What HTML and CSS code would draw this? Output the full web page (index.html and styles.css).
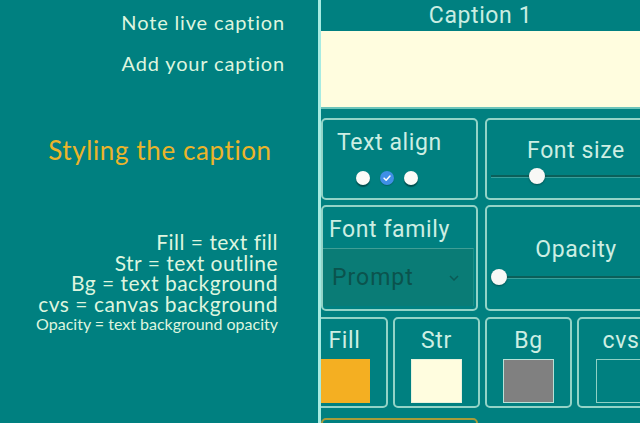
FILE: index.html
```html
<!DOCTYPE html>
<html>
<head>
<meta charset="utf-8">
<link rel="stylesheet" href="styles.css">
</head>
<body>
<div class="app">
  <div class="left">
    <div class="note">Note live caption</div>
    <div class="note">Add your caption</div>
    <div class="styling">Styling the caption</div>
    <div class="legend">
      <div class="leg">Fill = text fill</div>
      <div class="leg">Str = text outline</div>
      <div class="leg">Bg = text background</div>
      <div class="leg">cvs = canvas background</div>
      <div class="leg small">Opacity = text background opacity</div>
    </div>
  </div>
  <div class="divider"></div>
  <div class="right">
    <div class="head">Caption 1</div>
    <div class="caption-box"></div>
    <div class="panels">
      <div class="row row1">
        <div class="card align-card">
          <div class="align-inner">
            <div class="title">Text align</div>
            <div class="radios">
              <span class="radio"></span>
              <span class="radio on"><svg viewBox="0 0 12 12" width="10" height="10"><path d="M2.5 6.2 L5 8.6 L9.6 3.6" fill="none" stroke="#fff" stroke-width="1.8" stroke-linecap="round" stroke-linejoin="round"/></svg></span>
              <span class="radio"></span>
            </div>
          </div>
        </div>
        <div class="card size-card">
          <div class="title center">Font size</div>
          <div class="slider"><span class="thumb thumb-size"></span></div>
        </div>
      </div>
      <div class="row row2">
        <div class="card family-card">
          <div class="title fam">Font family</div>
          <div class="select">
            <span class="sel-text">Prompt</span>
            <svg class="chev" viewBox="0 0 10 6" width="10" height="6"><path d="M1 1 L5 5 L9 1" fill="none" stroke="#0b5a55" stroke-width="1.5"/></svg>
          </div>
        </div>
        <div class="card opacity-card">
          <div class="title center">Opacity</div>
          <div class="slider"><span class="thumb thumb-op"></span></div>
        </div>
      </div>
      <div class="row row3">
        <div class="card color-card"><div class="title center">Fill</div><div class="swatch fill"></div></div>
        <div class="card color-card"><div class="title center">Str</div><div class="swatch str"></div></div>
        <div class="card color-card"><div class="title center">Bg</div><div class="swatch bg"></div></div>
        <div class="card color-card"><div class="title center">cvs</div><div class="swatch cvs"></div></div>
      </div>
      <div class="row row4">
        <div class="card btn-card"></div>
      </div>
    </div>
  </div>
</div>
</body>
</html>
```

FILE: styles.css
```css
* { box-sizing: border-box; }
html, body { margin: 0; padding: 0; }
body { background: #008080; width: 640px; height: 423px; overflow: hidden; }
.app { display: flex; width: 640px; height: 423px; overflow: hidden; }

.left {
  width: 318px;
  flex: none;
  color: #def5df;
  font-family: Lato, "Open Sans", sans-serif;
  padding-top: 2px;
}
.note {
  text-align: right;
  padding-right: 33px;
  font-size: 20px;
  line-height: 41px;
  letter-spacing: 0.85px;
}
.styling {
  margin-top: 51px;
  text-align: center;
  font-size: 26px;
  line-height: 30px;
  letter-spacing: 0.6px;
  color: #ecb42a;
  padding-left: 2px;
}
.legend {
  margin-top: 67px;
  text-align: right;
  padding-right: 40px;
}
.leg {
  font-size: 21px;
  line-height: 20.5px;
  letter-spacing: 0.5px;
}
.leg.small {
  font-size: 16px;
  line-height: 20px;
  letter-spacing: 0;
}

.divider {
  width: 3px;
  flex: none;
  background: #a6ebe2;
}

.right {
  flex: 1;
  overflow: hidden;
  font-family: Roboto, "Liberation Sans", sans-serif;
  color: #cdeee3;
}
.head {
  height: 31px;
  line-height: 31px;
  text-align: center;
  font-size: 23px;
  letter-spacing: 0.6px;
  color: #c9ede2;
}
.caption-box {
  height: 78px;
  background: #fffddf;
  border-bottom: 2px solid #6cc4ba;
}
.panels {
  padding-top: 9px;
  display: flex;
  flex-direction: column;
}
.row { display: flex; gap: 7px; }
.row2 { margin-top: 5px; }
.row3 { margin-top: 6px; margin-left: -20px; gap: 5px; }
.row4 { margin-top: 10px; }

.card {
  flex: none;
  border: 2px solid #93d3c7;
  border-radius: 5px;
  background: #008080;
}
.title { font-size: 23px; line-height: 26px; letter-spacing: 0.6px; }
.title.center { text-align: center; }

.align-card { width: 157px; height: 82px; padding: 10px 0 0 14px; }
.align-inner { display: inline-flex; flex-direction: column; align-items: center; }
.radios { display: flex; gap: 10px; margin-top: 15px; padding-right: 4px; }
.radio {
  width: 14px; height: 14px; border-radius: 50%;
  background: #fbfbf8;
  box-shadow: 0 2px 1px rgba(0,40,40,0.55);
  display: flex; align-items: center; justify-content: center;
}
.radio.on { background: #3f8fe6; box-shadow: 0 1px 1px rgba(0,40,40,0.3); }

.size-card { width: 178px; height: 82px; padding-top: 18px; padding-left: 4px; }
.slider {
  position: relative;
  height: 2px;
  background: #0b5f5a;
  box-shadow: 0 1px 0 rgba(160,220,210,0.35);
}
.size-card .slider { margin-top: 11px; }
.thumb {
  position: absolute;
  top: -7px;
  width: 16px; height: 16px; border-radius: 50%;
  background: #f8f8f6;
  box-shadow: 0 1px 2px rgba(0,0,0,0.35);
}
.thumb-size { left: 38px; }
.thumb-op { left: 0; }

.family-card { width: 157px; height: 106px; padding-top: 10px; }
.title.fam { padding-left: 6px; }
.select {
  margin-top: 5px;
  width: 151px;
  height: 58px;
  background: #0a7c76;
  border-top: 1px solid #3f9e96;
  border-right: 1px solid #1b8d86;
  display: flex;
  align-items: center;
  padding-left: 9px;
  padding-right: 14px;
}
.sel-text { flex: 1; font-size: 23px; color: #0b534d; letter-spacing: 1px; }
.chev { flex: none; }

.opacity-card { width: 178px; height: 106px; padding-top: 30px; padding-left: 4px; }
.opacity-card .slider { margin-top: 13px; }

.color-card { width: 87px; height: 91px; padding-top: 9px; }
.color-card:last-child { width: 88px; }
.swatch {
  width: 51px; height: 44px;
  margin: 5px auto 0;
  border: 1px solid #a8e0d4;
}
.swatch.fill { background: #f4af22; border-color: #f4af22; }
.swatch.str { background: #fffddf; border-color: #e8f2dc; }
.swatch.bg { background: #808080; border-color: #b8e2d8; }
.swatch.cvs { background: transparent; border-color: #8fd0c4; }

.btn-card { width: 157px; height: 40px; border-color: #a89c3a; }
```
